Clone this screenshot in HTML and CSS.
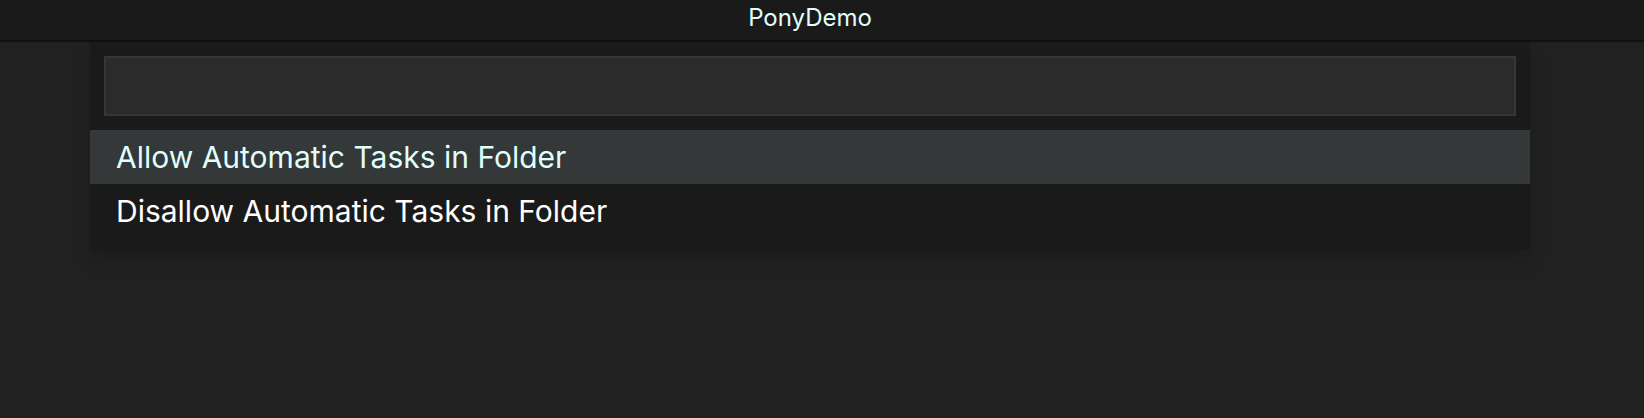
FILE: index.html
```html
<!DOCTYPE html>
<html lang="en">
<head>
<meta charset="utf-8">
<meta name="viewport" content="width=device-width, initial-scale=1">
<title>PonyDemo</title>
<link rel="stylesheet" href="styles.css">
</head>
<body>
<header class="titlebar">PonyDemo</header>
<main class="workspace">
  <section class="picker">
    <div class="picker-field">
      <input class="picker-input" type="text" aria-label="Filter tasks commands">
    </div>
    <div class="picker-list">
      <button class="picker-item picker-item-active" type="button">Allow Automatic Tasks in Folder</button>
      <button class="picker-item" type="button">Disallow Automatic Tasks in Folder</button>
    </div>
  </section>
</main>
</body>
</html>
```

FILE: styles.css
```css
* {
  box-sizing: border-box;
}

body {
  display: flex;
  flex-direction: column;
  min-height: 100vh;
  margin: 0;
  background: #212121;
  color: #fff;
  font-family: Inter, "Liberation Sans", sans-serif;
}

.titlebar {
  padding: 3px 114px 7px 90px;
  border-bottom: 2px solid #111;
  background: #1a1a1a;
  color: #e0fffc;
  font-size: 24px;
  line-height: 30px;
  text-align: center;
}

.workspace {
  flex: 1;
  padding: 0 114px 0 90px;
}

.picker {
  padding-bottom: 12px;
  background: #1a1a1a;
  box-shadow: 0 10px 16px rgba(0, 0, 0, 0.16);
}

.picker-field {
  padding: 14px;
}

.picker-input {
  display: block;
  width: 100%;
  height: 60px;
  padding: 0 12px;
  border: 2px solid #363636;
  border-radius: 0;
  outline: none;
  background: #2b2b2b;
  color: #fff;
  font: inherit;
  font-size: 30px;
}

.picker-item {
  display: block;
  width: 100%;
  padding: 0 26px;
  border: 0;
  background: transparent;
  color: #fff;
  font: inherit;
  font-size: 30px;
  line-height: 54px;
  text-align: left;
}

.picker-item-active {
  background: #343839;
  color: #e0fffc;
}
```
